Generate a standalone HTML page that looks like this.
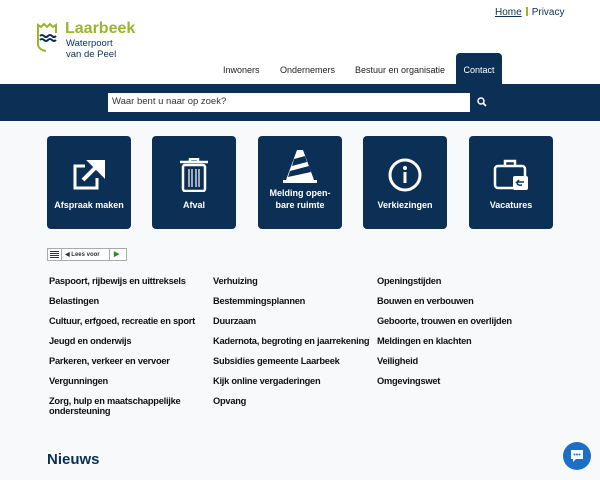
<!DOCTYPE html>
<html><head><meta charset="utf-8"><style>
*{margin:0;padding:0;box-sizing:border-box}
body{width:600px;height:480px;overflow:hidden;background:#f8f9fa;font-family:"Liberation Sans",sans-serif;position:relative;color:#111}
.hdr{position:absolute;left:0;top:0;width:600px;height:84px;background:#fff}
.top{position:absolute;top:7px;left:495px;font-size:10px;color:#0c3055}
.top u{color:#0c3055}
.top i{display:inline-block;width:2px;height:9px;background:#9bb52a;margin:0 4px;vertical-align:-1px}
.logo1{position:absolute;left:65px;top:20px;font-size:16px;font-weight:bold;color:#9bb52a}
.logo2{position:absolute;left:66px;top:38px;font-size:9.5px;color:#0c3055;line-height:11px}
.nav{position:absolute;top:65px;font-size:9px;color:#222}
.contact{position:absolute;left:456px;top:53px;width:46px;height:31px;background:#0c3055;border-radius:4px 4px 0 0;color:#fff;font-size:9px;text-align:center;padding-top:12px}
.bar{position:absolute;left:0;top:84px;width:600px;height:37px;background:#0c3055}
.search{position:absolute;left:108px;top:93px;width:362px;height:19px;background:#fff;font-size:9.5px;color:#333;padding:3px 4px}
.tile{position:absolute;top:136px;width:84px;height:93px;background:#0c3055;border-radius:4px;color:#fff;font-size:9px;font-weight:bold;text-align:center}
.tile svg{position:absolute;left:24px;top:22px}
.tile span{position:absolute;left:0;right:0;top:63px;line-height:12px}
.lees{position:absolute;left:47px;top:248px;width:80px;height:13px;border:1px solid #aaa;background:#fff;font-size:6px;font-weight:bold}
.l{position:absolute;font-size:9.3px;font-weight:bold;letter-spacing:-0.25px;color:#111;line-height:10px}
h2{position:absolute;left:47px;top:451px;font-size:15px;color:#0c3055}
.chat{position:absolute;left:563px;top:442px;width:28px;height:28px;border-radius:50%;background:#1c6fc4}
</style></head><body>
<div class="hdr">
<div class="top"><u>Home</u><i></i>Privacy</div>
<svg style="position:absolute;left:36px;top:22px" width="30" height="32" viewBox="0 0 30 32"><path d="M2 12V3l3 2 3-3 3 3 3-3 3 3 3-2v8" fill="none" stroke="#9bb52a" stroke-width="2"/><path d="M2 8v14c0 4 3 6 8 7" fill="none" stroke="#9bb52a" stroke-width="2"/><path d="M4 14q2-2 4 0t4 0t4 0t4 0M4 18q2-2 4 0t4 0t4 0t4 0" fill="none" stroke="#0c3055" stroke-width="2"/></svg>
<div class="logo1">Laarbeek</div>
<div class="logo2">Waterpoort<br>van de Peel</div>
<div class="nav" style="left:223px">Inwoners</div>
<div class="nav" style="left:280px">Ondernemers</div>
<div class="nav" style="left:355px">Bestuur en organisatie</div>
<div class="contact">Contact</div>
</div>
<div class="bar"></div>
<div class="search">Waar bent u naar op zoek?</div>
<svg style="position:absolute;left:477px;top:97px" width="10" height="10" viewBox="0 0 10 10"><circle cx="4" cy="4" r="3" fill="none" stroke="#fff" stroke-width="1.5"/><path d="M6 6l3 3" stroke="#fff" stroke-width="1.8"/></svg>
<div class="tile" style="left:47px"><svg width="36" height="34" viewBox="0 0 36 34"><path d="M14 8H4v22h22V20" fill="none" stroke="#fff" stroke-width="3"/><path d="M12 22L28 6M20 4h12v12z" stroke="#fff" stroke-width="4" fill="#fff"/></svg><span style="top:63px">Afspraak maken</span></div>
<div class="tile" style="left:152px"><svg width="36" height="34" viewBox="0 0 36 34"><path d="M4 4h28M14 4V1h8v3" stroke="#fff" stroke-width="2.5" fill="none"/><rect x="7" y="7" width="22" height="26" rx="2" fill="none" stroke="#fff" stroke-width="2.5"/><path d="M13 11v18M16 11v18M20 11v18M23 11v18" stroke="#fff" stroke-width="1.2"/></svg><span>Afval</span></div>
<div class="tile" style="left:258px"><svg style="top:14px" width="36" height="34" viewBox="0 0 36 34"><path d="M15 0h6l11 30H4z" fill="#fff"/><path d="M12 9l11-3 2 6-15 4zM8 21l19-5 2 6-23 5z" fill="#0c3055"/><rect x="1" y="30" width="34" height="3" fill="#fff"/></svg><span style="top:51px">Melding open-<br>bare ruimte</span></div>
<div class="tile" style="left:363px"><svg width="36" height="34" viewBox="0 0 36 34"><circle cx="18" cy="17" r="15" fill="none" stroke="#fff" stroke-width="3"/><circle cx="18" cy="10" r="2" fill="#fff"/><rect x="16.5" y="14" width="3" height="11" fill="#fff"/></svg><span>Verkiezingen</span></div>
<div class="tile" style="left:469px"><svg width="36" height="34" viewBox="0 0 36 34"><rect x="2" y="8" width="30" height="22" rx="3" fill="none" stroke="#fff" stroke-width="2.5"/><path d="M12 8V3h10v5" fill="none" stroke="#fff" stroke-width="2.5"/><rect x="20" y="18" width="15" height="14" rx="2" fill="#fff"/><path d="M31 24h-7l2-2M24 24q0 4 5 3" fill="none" stroke="#0c3055" stroke-width="1.5"/></svg><span>Vacatures</span></div>
<div class="lees"><span style="position:absolute;left:2px;top:2px;width:9px;height:7px;background:repeating-linear-gradient(#333 0 1px,#fff 1px 2px)"></span><span style="position:absolute;left:13px;top:0;width:1px;height:11px;background:#aaa"></span><span style="position:absolute;left:17px;top:2px;color:#333">◀ Lees voor</span><span style="position:absolute;left:61px;top:0;width:1px;height:11px;background:#aaa"></span><span style="position:absolute;left:66px;top:1px;color:#2a8a2a;font-size:7px">▶</span></div>
<div class="l" style="left:49px;top:276px">Paspoort, rijbewijs en uittreksels</div>
<div class="l" style="left:49px;top:296px">Belastingen</div>
<div class="l" style="left:49px;top:316px">Cultuur, erfgoed, recreatie en sport</div>
<div class="l" style="left:49px;top:336px">Jeugd en onderwijs</div>
<div class="l" style="left:49px;top:356px">Parkeren, verkeer en vervoer</div>
<div class="l" style="left:49px;top:376px">Vergunningen</div>
<div class="l" style="left:49px;top:396px">Zorg, hulp en maatschappelijke<br>ondersteuning</div>
<div class="l" style="left:213px;top:276px">Verhuizing</div>
<div class="l" style="left:213px;top:296px">Bestemmingsplannen</div>
<div class="l" style="left:213px;top:316px">Duurzaam</div>
<div class="l" style="left:213px;top:336px">Kadernota, begroting en jaarrekening</div>
<div class="l" style="left:213px;top:356px">Subsidies gemeente Laarbeek</div>
<div class="l" style="left:213px;top:376px">Kijk online vergaderingen</div>
<div class="l" style="left:213px;top:396px">Opvang</div>
<div class="l" style="left:377px;top:276px">Openingstijden</div>
<div class="l" style="left:377px;top:296px">Bouwen en verbouwen</div>
<div class="l" style="left:377px;top:316px">Geboorte, trouwen en overlijden</div>
<div class="l" style="left:377px;top:336px">Meldingen en klachten</div>
<div class="l" style="left:377px;top:356px">Veiligheid</div>
<div class="l" style="left:377px;top:376px">Omgevingswet</div>
<h2>Nieuws</h2>
<div class="chat"><svg style="position:absolute;left:7px;top:7px" width="14" height="14" viewBox="0 0 14 14"><path d="M1 1h12v9H6l-3 3v-3H1z" fill="#fff"/><circle cx="4.5" cy="5.5" r="1" fill="#1c6fc4"/><circle cx="7" cy="5.5" r="1" fill="#1c6fc4"/><circle cx="9.5" cy="5.5" r="1" fill="#1c6fc4"/></svg></div>
</body></html>
